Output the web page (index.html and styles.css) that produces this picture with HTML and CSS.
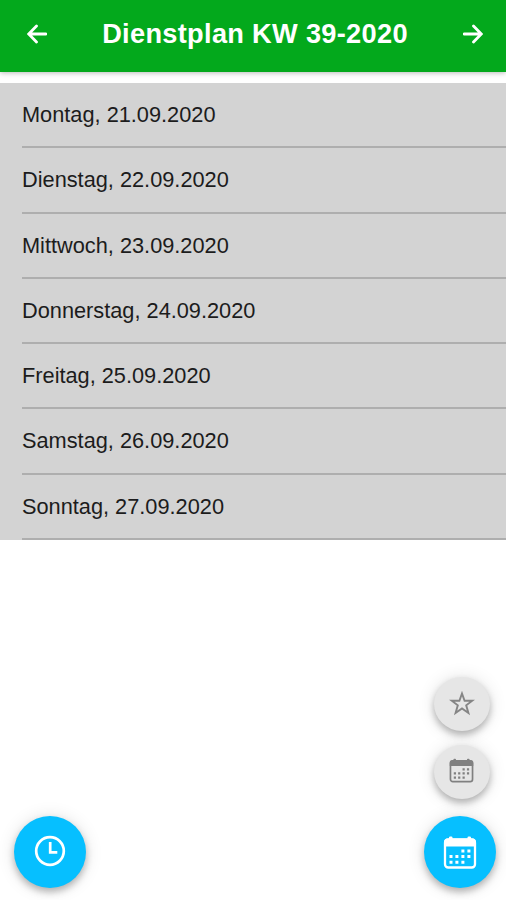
FILE: index.html
```
<!DOCTYPE html>
<html lang="de">
<head>
<meta charset="utf-8">
<title>Dienstplan</title>
<link rel="stylesheet" href="styles.css">
</head>
<body>
<svg class="defs" aria-hidden="true">
  <symbol id="calendar" viewBox="0 0 34 33">
    <rect x="2" y="3.5" width="30" height="28" rx="3.2" fill="none" stroke="currentColor" stroke-width="2.3"/>
    <path fill="currentColor" d="M1 10.5V6Q1 2.5 4.5 2.5H6V1.5Q6 .5 7.2 .5H8.3Q9.5 .5 9.5 1.5V2.5H24.5V1.5Q24.5 .5 25.7 .5H26.8Q28 .5 28 1.5V2.5H29.5Q33 2.5 33 6V10.5Z"/>
    <path fill="currentColor" d="M18.4 13.5h3v3h-3zM24.4 13.5h3v3h-3zM6.5 19h3v3h-3zM12.4 19h3v3h-3zM18.4 19h3v3h-3zM24.4 19h3v3h-3zM6.5 24.7h3v3h-3zM12.4 24.7h3v3h-3zM18.4 24.7h3v3h-3z"/>
  </symbol>
</svg>
<div class="app">
  <header class="header">
    <svg class="arrow" viewBox="0 0 20 20"><path d="M9.5 2 1.7 10 9.5 18M2 10H19"/></svg>
    <h1 class="title">Dienstplan KW 39-2020</h1>
    <svg class="arrow" viewBox="0 0 20 20"><path d="M10.5 2 18.3 10 10.5 18M1 10H18"/></svg>
  </header>
  <main class="list">
    <div class="day">Montag, 21.09.2020</div>
    <div class="day">Dienstag, 22.09.2020</div>
    <div class="day">Mittwoch, 23.09.2020</div>
    <div class="day">Donnerstag, 24.09.2020</div>
    <div class="day">Freitag, 25.09.2020</div>
    <div class="day">Samstag, 26.09.2020</div>
    <div class="day">Sonntag, 27.09.2020</div>
  </main>
  <footer class="actions">
    <div class="fab">
      <svg class="clock" viewBox="0 0 32 32"><circle cx="16" cy="16" r="13.8"/><path d="M16.2 7V17.3H23.3"/></svg>
    </div>
    <div class="stack">
      <div class="fab small">
        <svg class="star" viewBox="0 0 26 25"><path d="M13 2.5 15.6 9.7H23.3L17.2 14.3 19.4 22 13 17.4 6.6 22 8.8 14.3 2.7 9.7H10.4Z"/></svg>
      </div>
      <div class="fab small"><svg class="cal-small"><use href="#calendar"/></svg></div>
      <div class="fab main"><svg class="cal"><use href="#calendar"/></svg></div>
    </div>
  </footer>
</div>
</body>
</html>
```
FILE: styles.css
```
* { box-sizing: border-box; }
body {
  margin: 0;
  background: #fff;
  font-family: "Liberation Sans", Arial, sans-serif;
}
.defs { display: none; }
.app {
  height: 900px;
  display: flex;
  flex-direction: column;
  overflow: hidden;
}
.header {
  flex: none;
  height: 72px;
  padding: 0 23px 4px 27px;
  display: flex;
  align-items: center;
  justify-content: space-between;
  background: #03a91c;
  color: #fff;
  box-shadow: 0 1px 5px rgba(0, 0, 0, .28);
}
.arrow {
  width: 20px;
  height: 20px;
  fill: none;
  stroke: #fff;
  stroke-width: 2.8;
  stroke-linecap: round;
}
.title {
  margin: 0;
  font-size: 27.2px;
  line-height: 36px;
  font-weight: 700;
  letter-spacing: .31px;
  white-space: nowrap;
}
.list {
  flex: none;
  margin-top: 11px;
  padding-left: 22px;
  background: #d3d3d3;
}
.day {
  height: 65.27px;
  border-bottom: 2px solid #aeaeae;
  font-size: 21.76px;
  line-height: 64px;
  color: #1c1c1c;
}
.actions {
  margin-top: auto;
  padding: 0 10px 12px 14px;
  display: flex;
  align-items: flex-end;
  justify-content: space-between;
}
.stack {
  width: 72px;
  display: flex;
  flex-direction: column;
  align-items: center;
}
.fab {
  width: 72px;
  height: 72px;
  border-radius: 50%;
  display: flex;
  align-items: center;
  justify-content: center;
  background: #06bfff;
  color: #fff;
  box-shadow: 0 4px 7px rgba(0, 0, 0, .26), 0 1px 18px rgba(0, 0, 0, .12);
}
.small {
  width: 56px;
  height: 54px;
  margin: 0 0 14px 4px;
  background: #e6e6e6;
  color: #808080;
}
.small + .main { margin-top: 3px; }
.clock {
  width: 32px;
  height: 32px;
  margin-bottom: 2px;
  fill: none;
  stroke: #fff;
  stroke-width: 2.7;
}
.star {
  width: 26px;
  height: 25px;
  margin-bottom: 2px;
  fill: none;
  stroke: #858585;
  stroke-width: 1.9;
}
.cal { width: 34px; height: 33px; }
.cal-small { width: 25px; height: 25px; margin: 0 1px 3px 0; }
```
